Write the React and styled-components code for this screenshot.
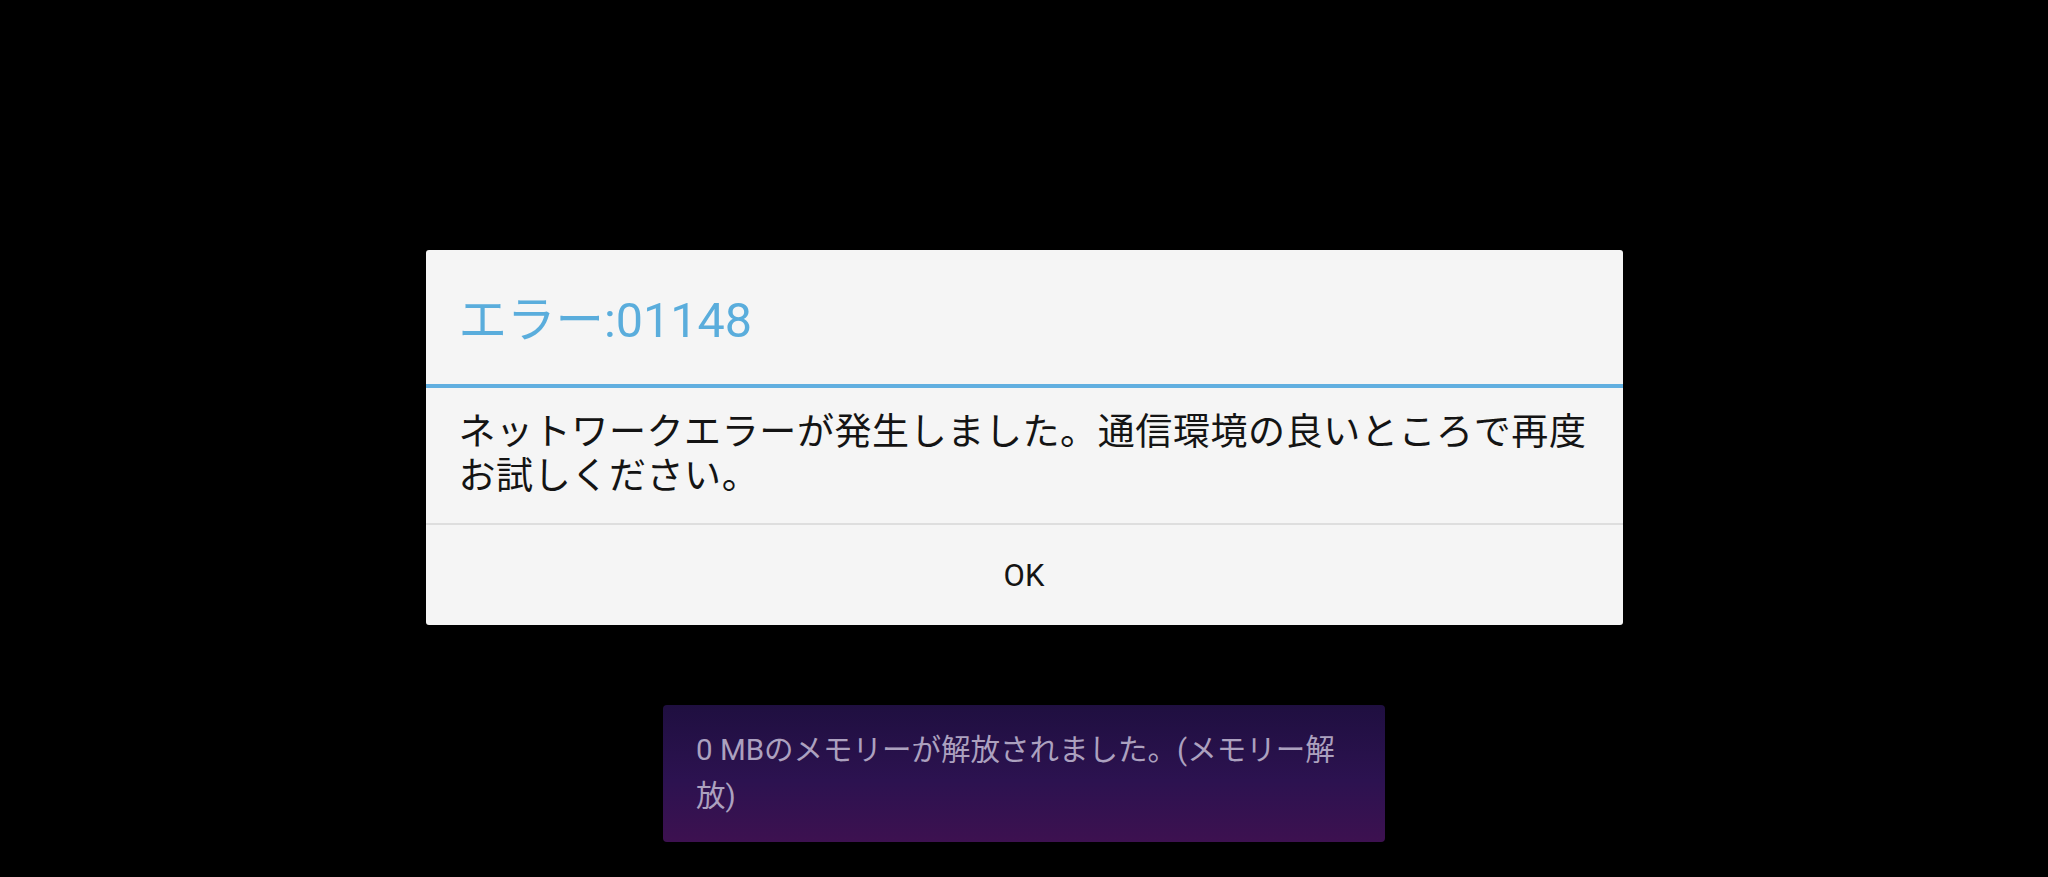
import styled, { createGlobalStyle } from "styled-components";

const GlobalStyle = createGlobalStyle`
  html, body {
    margin: 0;
    padding: 0;
    background: #000;
  }
  body {
    font-family: "Roboto", "Noto Sans CJK JP", sans-serif;
  }
`;

const Screen = styled.div`
  width: 2048px;
  height: 877px;
  background: #000;
  display: flex;
  flex-direction: column;
  align-items: center;
  padding-top: 250px;
  gap: 80px;
  box-sizing: border-box;
  overflow: hidden;
`;

const Dialog = styled.div`
  width: 1197px;
  background: #f5f5f5;
  border-radius: 3px;
  display: flex;
  flex-direction: column;
`;

const Title = styled.div`
  padding: 43px 33px 35px;
  font-size: 48.5px;
  line-height: 56px;
  color: #5aaddc;
  border-bottom: 4px solid #61afe0;
`;

const Message = styled.div`
  padding: 23px 30px 24px 33px;
  font-size: 37px;
  letter-spacing: 0.6px;
  line-height: 44px;
  color: #141414;
  border-bottom: 2px solid #dedede;
`;

const ActionButton = styled.button`
  height: 100px;
  border: none;
  background: transparent;
  font-family: inherit;
  font-size: 31px;
  color: #141414;
  display: flex;
  align-items: center;
  justify-content: center;
  cursor: pointer;
  padding: 0;
`;

const Toast = styled.div`
  width: 722px;
  box-sizing: border-box;
  padding: 22px 35px 23px 33px;
  border-radius: 4px;
  background: linear-gradient(180deg, #1f0f40 0%, #2c1250 55%, #3d1150 100%);
  color: #aca1bf;
  font-size: 29.5px;
  line-height: 46px;
`;

export default function App() {
  return (
    <>
      <GlobalStyle />
      <Screen>
        <Dialog>
          <Title>エラー:01148</Title>
          <Message>
            ネットワークエラーが発生しました。通信環境の良いところで再度お試しください。
          </Message>
          <ActionButton>OK</ActionButton>
        </Dialog>
        <Toast>0 MBのメモリーが解放されました。(メモリー解放)</Toast>
      </Screen>
    </>
  );
}
